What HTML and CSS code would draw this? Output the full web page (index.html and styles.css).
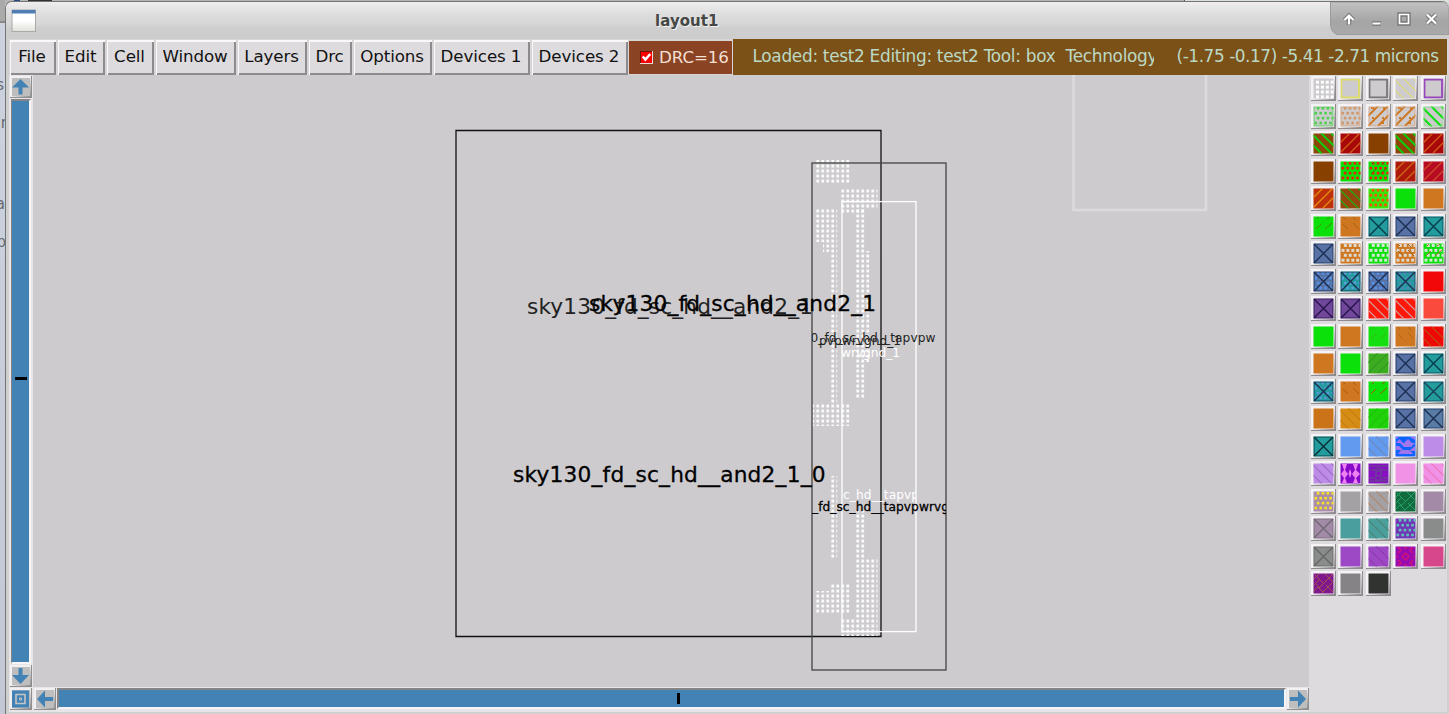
FILE: index.html
```
<!DOCTYPE html>
<html lang="en">
<head>
<meta charset="utf-8">
<title>layout1</title>
<link rel="stylesheet" href="styles.css">
</head>
<body>
<div class="desktop">
  <svg class="behind-top" width="1449" height="4" viewBox="0 0 1449 4">
    <rect width="1185" height="4" fill="#b5b5b5"/><rect x="1185" width="264" height="4" fill="#dbe0da"/>
    <rect x="14" width="6" height="2" fill="#23488c"/><rect x="28" width="24" height="2" fill="#333"/>
    <rect x="1184" width="1" height="3" fill="#555"/>
  </svg>
  <div class="behind-left">
    <span class="g1">s</span><span class="g2">r</span><span class="g3">a</span><span class="g4">p</span>
  </div>
</div>
<main class="window">
  <header class="titlebar">
    <svg class="appicon" width="26" height="24" viewBox="0 0 26 24">
      <defs><linearGradient id="paper" x2="0" y2="1"><stop offset="0" stop-color="#fff"/><stop offset=".5" stop-color="#fff"/><stop offset="1" stop-color="#dfe1d8"/></linearGradient></defs>
      <rect x="1" y="1" width="23.500" height="21.500" fill="url(#paper)" stroke="#aaa"/><rect x="1" y="1" width="23.500" height="3.500" fill="#507eb4"/>
    </svg>
    <h1>layout1</h1>
    <svg class="controls" width="119" height="33" viewBox="0 0 119 33">
      <defs><linearGradient id="ctl" x2="0" y2="1"><stop offset="0" stop-color="#c2c2c2"/><stop offset=".6" stop-color="#a5a5a5"/><stop offset="1" stop-color="#a9a9a9"/></linearGradient></defs>
      <path d="M.5 0H113Q119 2 119 8V32.500H7Q.5 30 .5 22Z" fill="url(#ctl)" stroke="#9b9b9b"/>
      <g fill="none" stroke="#777" stroke-width="4.400"><path d="M19 23V13M14.500 18L19 13.500L23.500 18"/><path d="M42 21.500H51"/><path d="M69.500 12.500H78.500V21.500H69.500Z"/><path d="M97 12.500L106 21.500M106 12.500L97 21.500"/></g>
      <g fill="none" stroke="#fff" stroke-width="2.200"><path d="M19 22.500V14M14.500 18L19 13.500L23.500 18"/><path d="M42.500 21.500H50.500"/><path d="M69.500 12.500H78.500V21.500H69.500Z" stroke-width="1.700"/><path d="M97 12.500L106 21.500M106 12.500L97 21.500"/></g>
    </svg>
  </header>
  <nav class="menubar">
    <button class="menu file">File</button><button class="menu edit">Edit</button><button class="menu cell">Cell</button><button class="menu win">Window</button><button class="menu layers">Layers</button><button class="menu drc">Drc</button><button class="menu options">Options</button><button class="menu dev1">Devices 1</button><button class="menu dev2">Devices 2</button>
    <div class="check">
      <svg width="13" height="13" viewBox="0 0 13 13"><path d="M0 0H13V13H0Z" fill="#e9ddd8"/><path d="M0 0H12V12H0Z" fill="#6b1400"/><path d="M1 1H12V12H1Z" fill="#f00"/><path d="M2.800 5.500L5.300 8.500L10.300 3" fill="none" stroke="#fff" stroke-width="2.500"/></svg>
      <span>DRC=16</span>
    </div>
    <div class="status">
      <svg width="714" height="34" viewBox="733 39 714 34">
        <text x="752.500" y="62" textLength="405">Loaded: test2 Editing: test2 Tool: box&#160; Technology</text>
        <rect x="1154" y="40" width="8" height="32" class="cover"/>
        <text x="1176.500" y="62" textLength="262.500">(-1.75 -0.17) -5.41 -2.71 microns</text>
      </svg>
    </div>
  </nav>
  <section class="work">
    <div class="left">
      <div class="upper">
        <div class="vscroll">
          <svg class="arrow" width="22" height="22" viewBox="0 0 22 22"><use href="#bevel"/><path d="M10.500 3L19 11.500H12.500V18.500H8.500V11.500H2Z"/></svg>
          <div class="track vertical"><i></i></div>
          <svg class="arrow" width="22" height="22" viewBox="0 0 22 22"><use href="#bevel"/><path d="M10.500 19L19 10H12.500V3H8.500V10H2Z"/></svg>
        </div>
        <svg class="canvas" width="1276" height="612" viewBox="33 75 1276 612">
          <defs>
            <g id="bevel"><path d="M0 0H22V22H0Z" fill="#8f8f8f"/><path d="M0 0H21L20 20L0 21Z" fill="#f2f0f3"/><path d="M2 2H20V20H2Z" fill="#bebebe"/></g>
            <pattern id="stipple" x="816" y="164.500" width="5" height="5" patternUnits="userSpaceOnUse"><rect x=".4" y=".2" width="2.700" height="2.700" fill="#fff"/></pattern>
            <clipPath id="tapclip"><rect x="812" y="163" width="134" height="507"/></clipPath>
            <clipPath id="innerclip"><rect x="842" y="202" width="74" height="430"/></clipPath>
            <clipPath id="leftclip"><rect x="456" y="130" width="356" height="507"/></clipPath>
          </defs>
          <path d="M1073.500 75V210H1206V75" fill="none" stroke="#dcdadd" stroke-width="2.600"/>
          <path d="M456 130.500H881V636.500H456Z" class="box black"/>
          <g fill="url(#stipple)">
            <path d="M815.500 160H850V183H815.500Z"/>
            <path d="M841 188H877.500V209H865V214H841Z"/>
            <path d="M815.500 208H837.200V252H823V242H815.500Z"/>
            <path d="M831 252H837.200V403H831Z"/>
            <path d="M856 209H865V398H856Z"/>
            <path d="M865 251H870V362H865Z"/>
            <path d="M812.500 404H850V426H812.500Z"/>
            <path d="M831 476H837.200V558H831Z"/>
            <path d="M856 511H865V559H877.500V636H841V618H856Z"/>
            <path d="M831 584H850V613H815.500V591H831Z"/>
          </g>
          <rect x="812" y="163" width="134" height="507" class="box gray"/>
          <rect x="842" y="201.600" width="74" height="430" class="box white"/>
          <g class="large">
            <g clip-path="url(#leftclip)"><text x="527" y="313.500" textLength="286" fill="#222">sky130_fd_sc_hd__and2_1</text></g>
            <text x="589" y="311" textLength="287" class="strong">sky130_fd_sc_hd__and2_1</text>
            <text x="513" y="482" textLength="312.500" class="strong">sky130_fd_sc_hd__and2_1_0</text>
          </g>
          <g class="small">
            <g clip-path="url(#tapclip)">
              <text x="810.500" y="342" textLength="125" fill="#222">0_fd_sc_hd__tapvpw</text>
              <text x="819" y="344.500" textLength="82" fill="#222">pvpwrvgnd_1</text>
              <text x="812" y="511" textLength="137" class="strong">_fd_sc_hd__tapvpwrvg</text>
            </g>
            <g clip-path="url(#innerclip)" fill="#fff">
              <text x="841" y="357" textLength="59">wrvgnd_1</text>
              <text x="843" y="498.500" textLength="76">c_hd__tapvp</text>
            </g>
          </g>
        </svg>
      </div>
      <div class="hscroll">
        <svg class="arrow" width="22" height="22" viewBox="0 0 22 22"><use href="#bevel"/><path d="M2 2.500H19V19.500H2Z"/><path d="M6 6.500H15V15.500H6Z" fill="none" stroke="#c5c5c5" stroke-width="1.600"/><path d="M9.500 10H11.500V12H9.500Z" fill="none" stroke="#c5c5c5" stroke-width="1"/></svg>
        <svg class="arrow" width="22" height="22" viewBox="0 0 22 22"><use href="#bevel"/><path d="M3 11L11 2.500V9H19V13H11V19.500Z"/></svg>
        <div class="track horizontal"><i></i></div>
        <svg class="arrow" width="22" height="22" viewBox="0 0 22 22"><use href="#bevel"/><path d="M19 11L11 2.500V9H3V13H11V19.500Z"/></svg>
      </div>
    </div>
    <aside class="palette" id="palette"></aside>
  </section>
</main>
<script src="palette.js"></script>
</body>
</html>
```
FILE: styles.css
```
* { box-sizing: border-box; }
body { margin: 0; width: 1449px; height: 714px; overflow: hidden; background: #c7cdd8; font-family: "DejaVu Sans", sans-serif; }
.desktop { position: absolute; inset: 0; }
.behind-top { display: block; }
.behind-left { position: absolute; left: 0; top: 0; width: 5px; height: 714px; overflow: hidden; background: linear-gradient(#aaa 0 21px, #888 21px 23px, #cdd3de 23px, #c3c9d4 100%); color: #676b72; font-size: 15px; }
.behind-left span { position: absolute; right: 1px; line-height: 16px; }
.behind-left .g1 { top: 77px; }
.behind-left .g2 { top: 115px; right: -2px; }
.behind-left .g3 { top: 196px; right: 0; }
.behind-left .g4 { top: 234px; right: -1px; }
.window { position: relative; display: flex; flex-direction: column; margin-left: 5px; margin-top: 1px; padding-left: 3px; width: 1444px; height: 713px; background: #cfcfcf; border: 1px solid #747674; border-right: 0; border-bottom: 0; border-radius: 7px 7px 0 0; overflow: hidden; }
.titlebar { flex: none; display: flex; height: 37px; margin-left: -3px; background: linear-gradient(#efedee 0, #dedede 12px, #d6d6d6 22px, #cecece 26px, #cdcdcd 100%); }
.appicon { flex: none; margin: 7px 0 0 5px; }
.titlebar h1 { width: 70px; margin: 9px 605px 0 618px; font-size: 15px; line-height: 20px; font-weight: bold; color: #454845; letter-spacing: .05px; text-shadow: 1px 1px 0 #f2f2f2; }
.controls { flex: none; }
.menubar { flex: none; display: flex; height: 36px; background: #d8d5d6; }
.menu { height: 35px; margin: 1px 2px 0 0; padding: 0 2px 4px 0; border: 0; background: #dddbde; box-shadow: inset 1px 2px #f9f9f9, inset -2px -2px #8d8b8e; font: 16.700px "DejaVu Sans", sans-serif; line-height: 30px; letter-spacing: -.1px; color: #111; text-align: center; white-space: nowrap; }
.file { width: 46px; margin-left: 1px; }
.edit { width: 47px; }
.cell { width: 47px; }
.win { width: 80px; }
.layers { width: 69px; }
.drc { width: 43px; }
.options { width: 78px; }
.dev1 { width: 96px; }
.dev2 { width: 96px; margin-right: 1px; }
.check { flex: none; display: flex; align-items: center; gap: 6px; width: 103px; height: 33px; margin: 2px 1px 0 0; padding: 0 0 2px 11px; background: #8b4423; color: #f3dfd3; font-size: 16.700px; letter-spacing: -.1px; }
.check svg { margin-top: 1px; }
.status { height: 36px; flex: none; width: 714px; background: #7b5118; }
.status svg { display: block; }
.status text { font-size: 16.900px; fill: #bcd9c4; }
.status .cover { fill: #7b5118; }
.work { display: flex; height: 637px; width: 1438px; background: #dddbde; }
.left { width: 1300px; flex: none; background: #cdcbce; }
.upper { display: flex; height: 612px; }
.vscroll { display: flex; flex-direction: column; width: 24px; height: 612px; background: #e7e5e8; padding-left: 1px; padding-top: 1px; }
.canvas { display: block; background: #cdcbce; }
.arrow { display: block; flex: none; fill: #4382b5; }
.track { display: flex; background: #4382b5; border-style: solid; border-color: #858587 #f6f4f7 #f6f4f7 #858587; }
.track i { display: block; background: #000; }
.vertical { width: 20px; height: 566px; margin: 1px 0 1px 1px; border-width: 2px 2px 2px 1px; }
.vertical i { width: 12px; height: 3px; margin: 276px 0 0 3px; }
.hscroll { display: flex; height: 25px; padding: 1px 0 1px 1px; gap: 1px; background: #e7e5e8; }
.hscroll .arrow:first-child { margin-right: 1px; }
.horizontal { flex: 1; height: 21px; border-width: 2px; }
.horizontal i { width: 3px; height: 11px; margin: 3px 0 0 618px; }
.palette { display: grid; grid-template-columns: repeat(5, 27.500px); grid-auto-rows: 27.500px; align-content: start; padding: 1px 0 0 1.500px; }
.swatch { display: block; width: 25px; height: 25px; }
.large { font-size: 21.700px; }
.small { font-size: 12.200px; }
.box { fill: none; stroke-width: 1.300px; }
.black { stroke: #111; }
.gray { stroke: #444; }
.white { stroke: #fff; }
.strong { stroke: #000; stroke-width: .3px; }
```
FILE: palette.js
```
// Each layer: fill, then stipple name / colour pairs
const BG = '#cdcbce', G = '#0be00b', O = '#ce7620', T = '#229c9c', B = '#5872a6', K = '#1b2d50';
const layers = [
  [BG,'dots','#fff'],[BG,'frame','#dfdc68'],[BG,'frame','#777577'],[BG,'back','#dfdc78'],[BG,'frame','#9746bb'],
  [BG,'sparse','#4fcf4f','edge','#55d055'],[BG,'sparse','#d09868','edge','#d6a078'],[BG,'bold','#ce7620','edge','#d6a078'],[BG,'bold','#ce7620','edge','#d6a078'],[BG,'boldb','#0be00b','edge','#8d8'],
  ['#8e4508','boldb','#10cb0b'],['#a90808','fwd','#cf5b16'],['#874000'],['#8e4508','boldb','#10cb0b'],['#a90808','fwd','#cf5b16'],
  ['#874000'],[G,'sparse','#ef1c0b'],[G,'sparse','#ef1c0b','dash','#368000'],['#ae180a','fwd','#cd6518'],['#b70b24','fwd','#cc4928'],
  ['#bd300a','fwd','#e28a10'],['#944810','back','#17b50d'],['#37e50b','sparse','#ff4d0b'],[G],[O],
  [G,'dash','#418c08'],[O,'dashb','#a5630f'],[T,'x','#063b4c'],[B,'x',K],[T,'x','#063b4c'],
  [B,'x',K],[O,'holes','#ded9ce'],[G,'holes','#d5e5d5'],[O,'holes','#ded9ce','dashb','#a55d0f'],[G,'holes','#d5e5d5','dash','#a56922'],
  [B,'sparse','#5693eb','x',K],[T,'sparse','#5ba0dd','x',K],[B,'sparse','#5693eb','x',K],[T,'sparse','#5488bd','x',K],['#f20808'],
  ['#714899','x','#26134b'],['#714899','x','#26134b'],['#ff170a','back','#d1a0a0'],['#ff170a','back','#d1a0a0'],['#f94a3d'],
  [G],[O],['#15df10','dash','#36b80e'],[O,'dashb','#ad681a'],['#ef0808','back','#bd4c0b'],
  [O],[G],['#3cad20','fwd','#359a20'],[B,'x',K],[T,'x','#063b4c'],
  [T,'sparse','#5599d5','x',K],[O,'dashb','#a85a0b'],[G,'dash','#8f5d08'],[B,'x',K],[T,'x','#17405a'],
  ['#cb7318'],['#d68d16','back','#c97d12'],['#20d20a','fwd','#20c30a'],[B,'x',K],['#587ca6','x',K],
  [T,'x','#062d35'],['#619aee'],['#619aee','back','#718abf'],['#1062ff','tri','#a176ea'],['#bd8be8'],
  ['#bd8be8','back','#a06bc4'],['#8608c9','bow','#ee80f2'],['#850fc1','ring','#6e3c99'],['#f092e6'],['#f092e6','back','#ed76bd'],
  ['#a88ca9','sparse','#f5e223'],['#a3a1a4'],['#a3a1a4','back','#b3896d'],['#116b3c','weave','#27a06c'],['#a38ba7'],
  ['#a38ba7','x','#706872'],['#4a9e9b'],['#4a9e9b','back','#4d8578'],['#7235b5','sparse','#5cc5bb'],['#8a8c8b'],
  ['#8a8c8b','x','#656766'],['#9d49c5'],['#9d49c5','back','#933aac'],['#960cb0','flower','#cf127b'],['#d6488b'],
  ['#80188b','weave','#a05354'],['#858386'],['#303330']
];
// Stipple drawings inside the 20 x 20 tile whose corner is (2.5, 2.5)
function dots(c, stagger, size) {
  let s = '';
  for (let j = 0; j < 4; j++) for (let i = 0; i < 4; i++) {
    const x = (stagger ? 3.5 + (j % 2 ? 0 : 2.3) : 5) + i * 4.9, y = (stagger ? 3 : 4.7) + j * 4.9;
    if (x < 22) s += `<rect x="${x}" y="${y}" width="${size}" height="${size}" fill="${c}"/>`;
  }
  return s;
}
const line = (d, c, w) => `<path d="${d}" stroke="${c}" stroke-width="${w}" fill="none"/>`;
const BACK = 'M2 4L21 23M2 14L11 23M10 2L23 15M20 2L23 5', FWD = 'M2 12L12 2M2 22L22 2M12 22L23 11';
const draw = {
  dots: c => dots(c, false, 3),
  sparse: c => dots(c, true, 2.6),
  holes: c => dots(c, true, 3),
  frame: c => line('M3.5 3.500H21V21.500H3.5Z', c, 1.8) + line('M22.2 3V22.2', c, .5),
  edge: c => line('M3 3H22V22H3Z', c, 1),
  back: c => line(BACK, c, 1.1),
  fwd: c => line(FWD, c, 1.4),
  bold: c => line(FWD, c, 1.9) + line('M5 4H8M16 14H18M6 14H8M15 19H18M17 4H20', c, 2),
  boldb: c => line(BACK, c, 2),
  dash: c => line('M5 15L10 10M14 15L21 9M6 5L8 3M16 5L19 3', c, 1),
  dashb: c => line('M5 10L10 15M15 9L21 15M5 3L7 5M15 3L18 6', c, 1),
  x: c => line('M3 3L22 22M22 3L3 22', c, 1.4) + line('M3 3H22V22H3Z', c, .8),
  tri: c => `<path d="M3 9L6.500 5L10 9ZM11 9L15 5L19 9ZM7 9H22L18 13H11ZM3 12H6L10 16H3ZM22 12L16 17H22ZM8 16H17L20 20H5ZM3 3H6L3 5ZM17 3H22V6Z" fill="${c}"/>`,
  bow: c => `<path d="M4 3H9L7 9L10 13L7 17L9 22H4L6 17L3 13L6 9ZM15 3H20L18 9L22 13L18 17L20 22H15L17 17L14 13L17 9ZM12 8L13.500 12.500L12 17L10.500 12.500Z" fill="${c}"/>`,
  ring: c => line('M3 5H22M3 9H9L12 7L16 9H22M3 17H9L12 20L16 17H22M3 20H22M10 10H15V15H10Z', c, 1.5),
  flower: c => line('M12.500 9L16 12.500L12.500 16L9 12.500ZM5 3L8 6L5 9M20 3L17 6L20 9M5 16L8 19L5 22M20 16L17 19L20 22M11 4H14M11 21H14M3 12.500H5M20 12.500H22', c, 1.5),
  weave: c => line('M3 8L8 3M4 4L12 12M3 14L9 8M3 20L7 16L12 21M9 16L22 3M14 3L22 11M11 22L21 12M15 14L22 21M4 12L9 17', c, 1)
};
document.getElementById('palette').innerHTML = layers.map(([fill, ...marks]) => {
  let art = '';
  for (let i = 0; i < marks.length; i += 2) art += draw[marks[i]](marks[i + 1]);
  return `<svg class="swatch" viewBox="0 0 25 25"><path d="M0 0H25V25H0Z" fill="#8e8c8f"/><path d="M0 0H24L23 23L0 24Z" fill="#f4f2f5"/><svg x="2.500" y="2.500" width="20" height="20" viewBox="2.500 2.500 20 20"><path d="M2 2H23V23H2Z" fill="${fill}"/>${art}</svg></svg>`;
}).join('');
```
